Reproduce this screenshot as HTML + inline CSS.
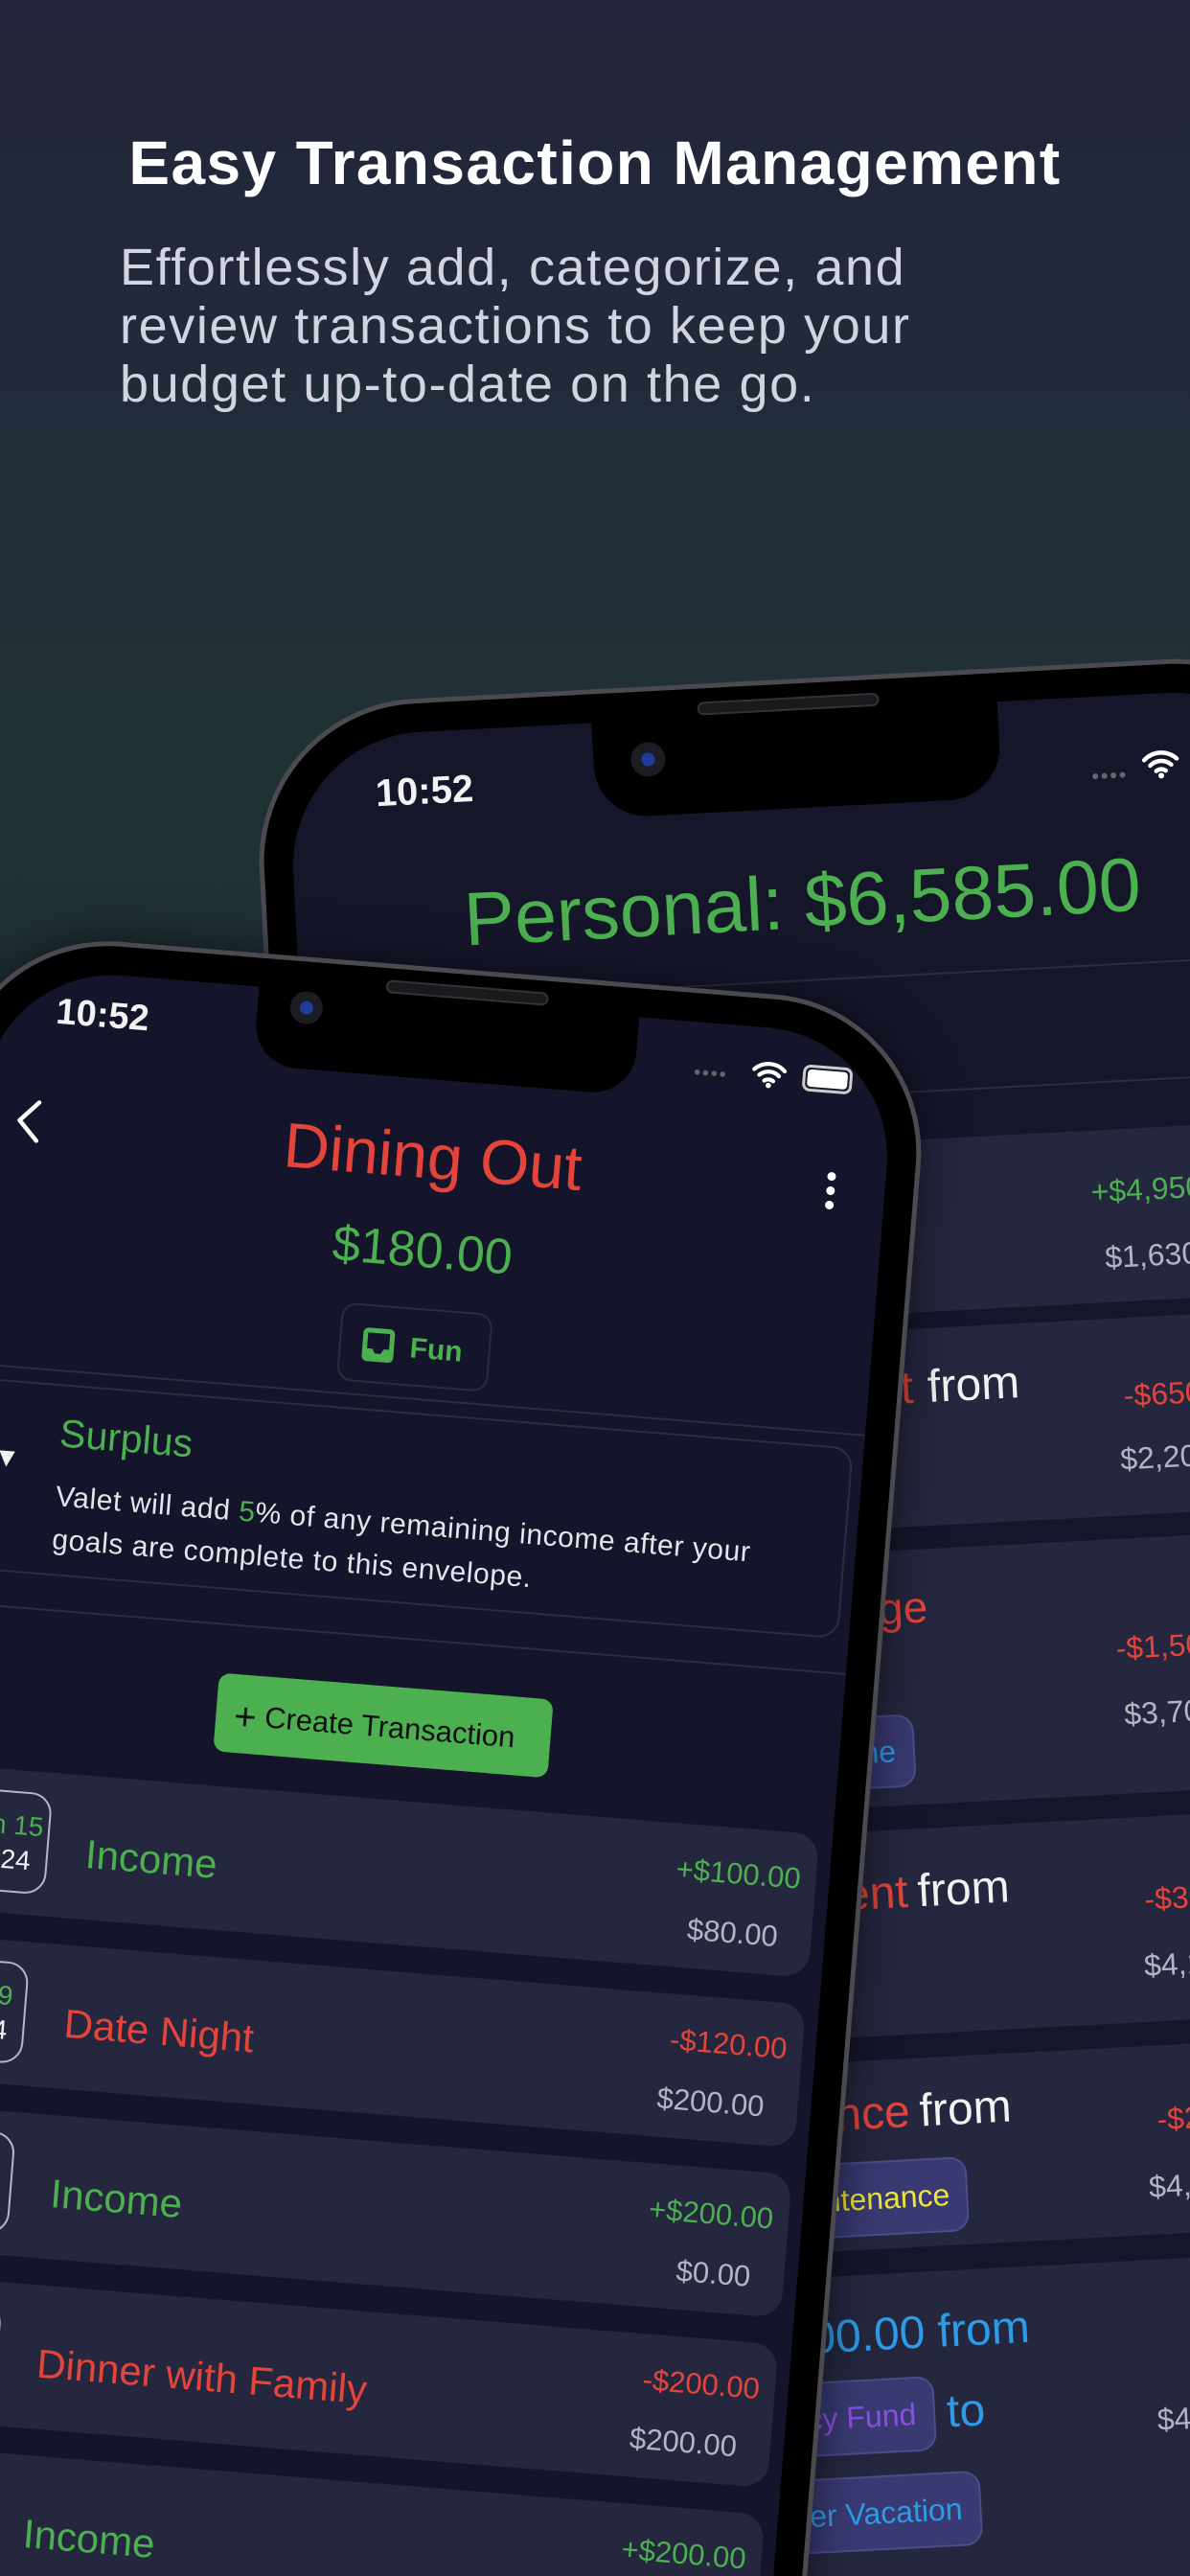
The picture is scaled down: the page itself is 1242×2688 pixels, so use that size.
<!DOCTYPE html>
<html><head><meta charset="utf-8">
<style>
*{margin:0;padding:0;box-sizing:border-box}
html,body{width:1242px;height:2688px;overflow:hidden}
body{position:relative;font-family:"Liberation Sans",sans-serif;
background:linear-gradient(180deg,#232439 0%,#222a3a 14%,#1f3233 30%,#1f2f34 40%,#20283a 55%,#222338 100%);}
.t{position:absolute;white-space:nowrap;line-height:1}
.ph{position:absolute;background:#000;border:5px solid #4a4a50;}
.scr{position:absolute;inset:30px;overflow:hidden;background:#15162a}
.w{position:absolute;left:-35px;top:-35px}
.row{position:absolute;background:#25273f;border-radius:26px}
.g{color:#4caf50}.r{color:#e5443a}.gr{color:#b4b5c2}.wh{color:#f2f2f2}.b{color:#2d9be6}
</style></head><body>

<div class="t" style="left:0;width:1242px;text-align:center;top:138px;font-size:64px;font-weight:bold;color:#fff;letter-spacing:1.4px">Easy Transaction Management</div>
<div class="t" style="left:125px;top:252px;font-size:54px;color:#d2d5df;letter-spacing:1.6px">Effortlessly add, categorize, and</div>
<div class="t" style="left:125px;top:313px;font-size:54px;color:#d2d5df;letter-spacing:1.6px">review transactions to keep your</div>
<div class="t" style="left:125px;top:374px;font-size:54px;color:#d2d5df;letter-spacing:1.6px">budget up-to-date on the go.</div>

<!-- BACK PHONE -->
<div class="ph" style="left:262px;top:738px;width:1128px;height:2200px;border-radius:170px;transform-origin:0 0;transform:rotate(-3deg)">
 <div class="scr" style="border-radius:140px;background:#15162a">
  <div class="w" style="width:1128px;height:2200px">
   <div style="position:absolute;left:354px;top:0;width:424px;height:135px;background:#000;border-radius:0 0 55px 55px"></div>
   <div style="position:absolute;left:393px;top:58px;width:36px;height:36px;border-radius:50%;background:#1c1c22"><div style="position:absolute;left:11px;top:11px;width:14px;height:14px;border-radius:50%;background:#1e3c9a"></div></div>
   <div class="t wh" style="left:125px;top:77px;font-size:40px;font-weight:bold">10:52</div>
   <div class="t" style="left:872px;top:110px;font-size:14px;color:#666;letter-spacing:1px">●●●●</div>
   <svg style="position:absolute;left:925px;top:92px" width="40" height="32" viewBox="0 0 40 32"><path d="M3 12a24 24 0 0 1 34 0M9 18a16 16 0 0 1 22 0M15 24a8 8 0 0 1 10 0" stroke="#fff" stroke-width="4.5" fill="none" stroke-linecap="round"/><circle cx="20" cy="29" r="3" fill="#fff"/></svg>
   <div class="t g" style="left:64px;width:1000px;text-align:center;top:193px;font-size:79px">Personal: $6,585.00</div>
   <div style="position:absolute;left:0;width:1128px;top:314px;height:2px;background:#2c2d3f"></div>
   <div style="position:absolute;left:0;width:1128px;top:436px;height:2px;background:#2c2d3f"></div>
   <div class="row" style="left:40px;width:1050px;top:487px;height:180px"></div>
   <div class="row" style="left:40px;width:1050px;top:684px;height:206px"></div>
   <div class="row" style="left:40px;width:1050px;top:914px;height:266px"></div>
   <div class="row" style="left:40px;width:1050px;top:1205px;height:214px"></div>
   <div class="row" style="left:40px;width:1050px;top:1444px;height:197px"></div>
   <div class="row" style="left:40px;width:1050px;top:1667px;height:500px"></div>
   <div class="t g" style="left:849px;top:535px;font-size:32px">+$4,950.00</div>
   <div class="t gr" style="left:860px;top:604px;font-size:32px">$1,630.00</div>
   <div class="t r" style="right:475px;top:722px;font-size:48px">Car Payment</div>
   <div class="t wh" style="left:668px;top:722px;font-size:48px">from</div>
   <div class="t r" style="left:872px;top:749px;font-size:32px">-$650.00</div>
   <div class="t gr" style="left:865px;top:815px;font-size:32px">$2,200.00</div>
   <div class="t r" style="right:472px;top:951px;font-size:46px">Mortgage</div>
   <div class="t r" style="left:850px;top:1012px;font-size:32px">-$1,500.00</div>
   <div class="t gr" style="left:855px;top:1081px;font-size:32px">$3,700.00</div>
   <div style="position:absolute;left:435px;width:200px;top:1085px;height:76px;background:#393a72;border:2px solid #4b4c8c;border-radius:18px"></div>
   <div class="t b" style="right:513px;top:1107px;font-size:32px">Home</div>
   <div class="t r" style="right:508px;top:1247px;font-size:48px">Rent Payment</div>
   <div class="t wh" style="left:630px;top:1247px;font-size:48px">from</div>
   <div class="t r" style="left:866px;top:1275px;font-size:32px">-$300.00</div>
   <div class="t gr" style="left:862px;top:1344px;font-size:32px">$4,100.00</div>
   <div class="t r" style="right:518px;top:1476px;font-size:48px">Insurance</div>
   <div class="t wh" style="left:620px;top:1476px;font-size:48px">from</div>
   <div style="position:absolute;left:366px;width:300px;top:1549px;height:78px;background:#393a72;border:2px solid #4b4c8c;border-radius:18px"></div>
   <div class="t" style="right:481px;top:1572px;font-size:32px;color:#ede53a">Car Maintenance</div>
   <div class="t r" style="left:867px;top:1505px;font-size:32px">-$250.00</div>
   <div class="t gr" style="left:855px;top:1575px;font-size:32px">$4,350.00</div>
   <div class="t b" style="right:405px;top:1707px;font-size:48px">$1,000.00 from</div>
   <div style="position:absolute;left:320px;width:300px;top:1776px;height:78px;background:#393a72;border:2px solid #4b4c8c;border-radius:18px"></div>
   <div class="t" style="right:528px;top:1799px;font-size:32px;color:#8a4fe0">Emergency Fund</div>
   <div class="t b" style="left:632px;top:1791px;font-size:48px">to</div>
   <div style="position:absolute;left:363px;width:300px;top:1877px;height:78px;background:#393a72;border:2px solid #4b4c8c;border-radius:18px"></div>
   <div class="t b" style="right:485px;top:1900px;font-size:32px">Summer Vacation</div>
   <div class="t gr" style="left:851px;top:1818px;font-size:32px">$4,000.00</div>
  </div>
 </div>
 <div style="position:absolute;left:460px;top:14px;width:190px;height:14px;border-radius:7px;background:#1a1a1e;border:2px solid #333"></div>
</div>

<!-- FRONT PHONE -->
<div class="ph" style="left:-42px;top:1051px;width:1016px;height:2200px;border-radius:165px;transform-origin:100% 0;transform:rotate(4.6deg);box-shadow:0 0 50px rgba(0,0,0,.55)">
 <div class="scr" style="border-radius:135px;background:#14152a">
  <div class="w" style="width:1016px;height:2200px">
   <div style="position:absolute;left:313px;top:0;width:398px;height:117px;background:#000;border-radius:0 0 45px 45px"></div>
   <div style="position:absolute;left:347px;top:36px;width:34px;height:34px;border-radius:50%;background:#1c1c22"><div style="position:absolute;left:10px;top:10px;width:14px;height:14px;border-radius:50%;background:#1e3c9a"></div></div>
   <div class="t wh" style="left:104px;top:59px;font-size:38px;font-weight:bold">10:52</div>
   <div class="t" style="left:772px;top:80px;font-size:13px;color:#666;letter-spacing:1px">●●●●</div>
   <svg style="position:absolute;left:832px;top:68px" width="38" height="30" viewBox="0 0 40 32"><path d="M3 12a24 24 0 0 1 34 0M9 18a16 16 0 0 1 22 0M15 24a8 8 0 0 1 10 0" stroke="#fff" stroke-width="4.5" fill="none" stroke-linecap="round"/><circle cx="20" cy="29" r="3" fill="#fff"/></svg>
   <div style="position:absolute;left:886px;top:70px;width:52px;height:28px;border:3px solid #ccc;border-radius:8px;padding:2px"><div style="width:100%;height:100%;background:#fff;border-radius:4px"></div></div>
   <svg style="position:absolute;left:70px;top:170px" width="28" height="48" viewBox="0 0 28 48"><path d="M24 4L5 24l19 20" stroke="#fff" stroke-width="4.5" fill="none" stroke-linecap="round" stroke-linejoin="round"/></svg>
   <div class="t r" style="left:208px;width:600px;text-align:center;top:164px;font-size:66px">Dining Out</div>
   <div style="position:absolute;left:920px;top:180px;width:9px;height:9px;border-radius:50%;background:#fff"></div>
   <div style="position:absolute;left:920px;top:195px;width:9px;height:9px;border-radius:50%;background:#fff"></div>
   <div style="position:absolute;left:920px;top:210px;width:9px;height:9px;border-radius:50%;background:#fff"></div>
   <div class="t g" style="left:205px;width:600px;text-align:center;top:270px;font-size:52px">$180.00</div>
   <div style="position:absolute;left:426px;top:356px;width:158px;height:82px;border:2px solid #2b2c3e;border-radius:16px"></div>
   <svg style="position:absolute;left:450px;top:380px" width="34" height="36" viewBox="0 0 34 36"><rect x="3" y="3" width="28" height="30" rx="3" fill="none" stroke="#4caf50" stroke-width="5"/><path d="M3 22h8l3 5h6l3-5h8v11H3z" fill="#4caf50"/></svg>
   <div class="t g" style="left:500px;top:384px;font-size:30px;font-weight:bold">Fun</div>
   <div style="position:absolute;left:0;width:1016px;top:450px;height:2px;background:#2c2d3f"></div>
   <div style="position:absolute;left:48px;width:922px;top:465px;height:200px;border:2px solid #2c2d3f;border-radius:22px"></div>
   <div class="t wh" style="left:76px;top:532px;font-size:28px">▼</div>
   <div class="t g" style="left:143px;top:496px;font-size:41px">Surplus</div>
   <div class="t" style="left:144px;top:568px;font-size:30px;color:#e4e4ea;letter-spacing:0.6px">Valet will add <span class="g">5</span>% of any remaining income after your</div>
   <div class="t" style="left:144px;top:613px;font-size:30px;color:#e4e4ea;letter-spacing:0.6px">goals are complete to this envelope.</div>
   <div style="position:absolute;left:0;width:1016px;top:700px;height:2px;background:#2c2d3f"></div>
   <div style="position:absolute;left:329px;top:752px;width:350px;height:82px;background:#4caf50;border-radius:12px"></div>
   <div class="t" style="left:348px;top:776px;font-size:31px;color:#111"><span style="font-size:40px;vertical-align:-4px">+</span>&nbsp;Create Transaction</div>

   <div class="row" style="left:48px;width:919px;top:870px;height:150px"></div>
   <div class="row" style="left:48px;width:919px;top:1048px;height:150px"></div>
   <div class="row" style="left:48px;width:919px;top:1226px;height:150px"></div>
   <div class="row" style="left:48px;width:919px;top:1404px;height:150px"></div>
   <div class="row" style="left:48px;width:919px;top:1582px;height:300px"></div>

   <div style="position:absolute;left:68px;top:892px;width:98px;height:106px;border:2px solid #b8b8c2;border-radius:22px;text-align:center;padding-top:16px;font-size:28px;line-height:36px"><span class="g">Jan 15</span><br><span class="wh">2024</span></div>
   <div class="t g" style="left:205px;top:931px;font-size:42px">Income</div>
   <div class="t g" style="right:65px;top:902px;font-size:31px">+$100.00</div>
   <div class="t gr" style="right:84px;top:964px;font-size:31px">$80.00</div>

   <div style="position:absolute;left:58px;top:1070px;width:98px;height:106px;border:2px solid #b8b8c2;border-radius:22px;text-align:center;padding-top:16px;font-size:28px;line-height:36px"><span class="g">Jan 9</span><br><span class="wh">2024</span></div>
   <div class="t r" style="left:197px;top:1109px;font-size:42px">Date Night</div>
   <div class="t r" style="right:65px;top:1080px;font-size:31px">-$120.00</div>
   <div class="t gr" style="right:84px;top:1142px;font-size:31px">$200.00</div>

   <div style="position:absolute;left:58px;top:1248px;width:98px;height:106px;border:2px solid #b8b8c2;border-radius:22px;text-align:center;padding-top:16px;font-size:28px;line-height:36px"><span class="g">Jan 1</span><br><span class="wh">2024</span></div>
   <div class="t g" style="left:197px;top:1287px;font-size:42px">Income</div>
   <div class="t g" style="right:65px;top:1258px;font-size:31px">+$200.00</div>
   <div class="t gr" style="right:84px;top:1320px;font-size:31px">$0.00</div>

   <div style="position:absolute;left:58px;top:1426px;width:98px;height:106px;border:2px solid #b8b8c2;border-radius:22px;text-align:center;padding-top:16px;font-size:28px;line-height:36px"><span class="g">Dec 24</span><br><span class="wh">2023</span></div>
   <div class="t r" style="left:197px;top:1465px;font-size:42px">Dinner with Family</div>
   <div class="t r" style="right:65px;top:1436px;font-size:31px">-$200.00</div>
   <div class="t gr" style="right:84px;top:1498px;font-size:31px">$200.00</div>

   <div style="position:absolute;left:58px;top:1604px;width:98px;height:106px;border:2px solid #b8b8c2;border-radius:22px;text-align:center;padding-top:16px;font-size:28px;line-height:36px"><span class="g">Dec 1</span><br><span class="wh">2023</span></div>
   <div class="t g" style="left:197px;top:1643px;font-size:42px">Income</div>
   <div class="t g" style="right:65px;top:1614px;font-size:31px">+$200.00</div>
   <div class="t gr" style="right:84px;top:1676px;font-size:31px">$0.00</div>
  </div>
 </div>
 <div style="position:absolute;left:440px;top:12px;width:170px;height:14px;border-radius:7px;background:#1a1a1e;border:2px solid #333"></div>
</div>
</body></html>
